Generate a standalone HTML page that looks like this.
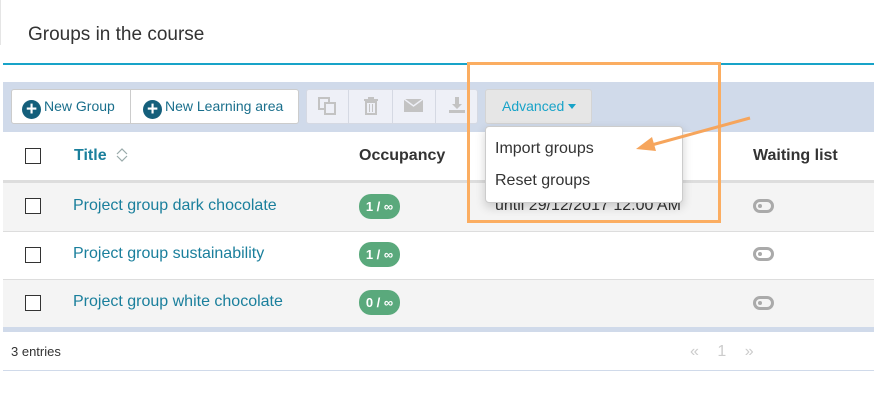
<!DOCTYPE html>
<html><head><meta charset="utf-8"><style>
*{margin:0;padding:0;box-sizing:border-box}
body{width:874px;height:401px;background:#fff;font-family:"Liberation Sans",sans-serif;position:relative;overflow:hidden;color:#333}
.a{position:absolute}
.cb{position:absolute;left:25px;width:16px;height:16px;border:1px solid #333;background:#fff}
.lnk{position:absolute;left:73px;color:#1a7f9c;font-size:16px}
.badge{position:absolute;left:359px;width:41px;height:25px;border-radius:12px;background:#5aa97c;color:#fff;font-weight:bold;font-size:13px;line-height:25px;text-align:center}
.tog{position:absolute;left:753px;width:21px;height:14px;border:3px solid #aaa;border-radius:7px}
.tog:after{content:"";position:absolute;left:2px;top:2px;width:4px;height:4px;border-radius:50%;background:#aaa}
.btn{position:absolute;top:89px;height:35px;font-size:14px;line-height:35px}
.plus{display:inline-block;width:19px;height:19px;border-radius:50%;background:#145f7b;color:#fff;font-weight:bold;text-align:center;line-height:19px;font-size:19px;vertical-align:-4px;margin-right:3px}
</style></head><body>
<div class="a" style="left:0;top:0;width:1px;height:45px;background:#e5e5e5"></div>
<div class="a" style="left:28px;top:24px;font-size:19px;color:#333">Groups in the course</div>
<div class="a" style="left:3px;top:63px;width:871px;height:2px;background:#18a3c8"></div>
<div class="a" style="left:3px;top:82px;width:871px;height:50px;background:#d0daea"></div>
<div class="a" style="left:11px;top:89px;width:288px;height:35px;background:#fff;border:1px solid #ccc;border-radius:3px"></div>
<div class="a" style="left:130px;top:89px;width:1px;height:35px;background:#ccc"></div>
<div class="btn" style="left:22px;color:#1a6f8c"><span class="plus">+</span>New Group</div>
<div class="btn" style="left:143px;color:#1a6f8c"><span class="plus">+</span>New Learning area</div>
<div class="a" style="left:306px;top:89px;width:172px;height:35px;background:#eef0f7;border:1px solid #d5d9e3;border-radius:3px"></div>
<div class="a" style="left:348px;top:89px;width:1px;height:35px;background:#d5d9e3"></div>
<div class="a" style="left:392px;top:89px;width:1px;height:35px;background:#d5d9e3"></div>
<div class="a" style="left:435px;top:89px;width:1px;height:35px;background:#d5d9e3"></div>
<svg class="a" style="left:318px;top:97px" width="20" height="18"><rect x="1" y="1" width="10" height="11" fill="none" stroke="#c3c3c3" stroke-width="2"/><rect x="7" y="6" width="10" height="11" fill="#eef0f7" stroke="#c3c3c3" stroke-width="2"/></svg>
<svg class="a" style="left:362px;top:96px" width="18" height="19"><rect x="2" y="3" width="14" height="2" fill="#c3c3c3"/><rect x="6" y="1" width="6" height="2" fill="#c3c3c3"/><rect x="4" y="6" width="10" height="12" fill="none" stroke="#c3c3c3" stroke-width="2"/><path d="M7.5 8v8M10.5 8v8" stroke="#c3c3c3"/></svg>
<svg class="a" style="left:404px;top:99px" width="20" height="14"><rect x="0" y="0" width="19" height="13" fill="#c3c3c3"/><path d="M0 0l9.5 7L19 0" fill="none" stroke="#eef0f7" stroke-width="1.5"/></svg>
<svg class="a" style="left:448px;top:96px" width="18" height="18"><path d="M7 1h4v7h3l-5 5-5-5h3z" fill="#c3c3c3"/><rect x="1" y="14" width="16" height="3" fill="#c3c3c3"/></svg>
<div class="a" style="left:485px;top:89px;width:107px;height:35px;background:#e6e6e6;border:1px solid #d4d4d4;border-radius:3px;color:#18a3c8;font-size:14px;line-height:33px;padding-left:16px">Advanced <span style="display:inline-block;border-left:4px solid transparent;border-right:4px solid transparent;border-top:5px solid #18a3c8;vertical-align:2px"></span></div>
<div class="cb" style="top:148px"></div>
<div class="a" style="left:74px;top:147px;color:#1a7f9c;font-weight:bold;font-size:16px">Title</div>
<svg class="a" style="left:116px;top:148px" width="12" height="14"><path d="M1 6l5-5 5 5M1 8l5 5 5-5" fill="none" stroke="#9aa" stroke-width="1.2"/></svg>
<div class="a" style="left:359px;top:147px;font-weight:bold;font-size:16px">Occupancy</div>
<div class="a" style="left:753px;top:147px;font-weight:bold;font-size:16px">Waiting list</div>
<div class="a" style="left:3px;top:180px;width:871px;height:3px;background:#ddd"></div>
<div class="a" style="left:3px;top:183px;width:871px;height:48px;background:#f4f4f4"></div>
<div class="a" style="left:3px;top:231px;width:871px;height:1px;background:#ddd"></div>
<div class="a" style="left:3px;top:279px;width:871px;height:1px;background:#ddd"></div>
<div class="a" style="left:3px;top:280px;width:871px;height:47px;background:#f4f4f4"></div>
<div class="a" style="left:3px;top:327px;width:871px;height:5px;background:#d0daea"></div>
<div class="cb" style="top:198px"></div><div class="lnk" style="top:197px">Project group dark chocolate</div><div class="badge" style="top:194px">1 / ∞</div>
<div class="a" style="left:495px;top:197px;font-size:16px">until 29/12/2017 12:00 AM</div>
<div class="tog" style="top:199px"></div>
<div class="cb" style="top:247px"></div><div class="lnk" style="top:245px">Project group sustainability</div><div class="badge" style="top:242px">1 / ∞</div>
<div class="tog" style="top:247px"></div>
<div class="cb" style="top:295px"></div><div class="lnk" style="top:293px">Project group white chocolate</div><div class="badge" style="top:290px">0 / ∞</div>
<div class="tog" style="top:296px"></div>
<div class="a" style="left:11px;top:344px;font-size:13px">3 entries</div>
<div class="a" style="left:690px;top:343px;font-size:16px;color:#ccc;word-spacing:14px">« 1 »</div>
<div class="a" style="left:3px;top:370px;width:871px;height:1px;background:#d0daea"></div>
<div class="a" style="left:485px;top:126px;width:198px;height:77px;background:#fff;border:1px solid #ccc;border-radius:4px;box-shadow:0 4px 10px rgba(0,0,0,.18)"></div>
<div class="a" style="left:495px;top:140px;font-size:16px">Import groups</div>
<div class="a" style="left:495px;top:172px;font-size:16px">Reset groups</div>
<div class="a" style="left:467px;top:62px;width:254px;height:161px;border:3px solid #fbad61"></div>
<svg class="a" style="left:630px;top:110px" width="130" height="50"><path d="M120 8L18 36" stroke="#f6a55c" stroke-width="3"/><path d="M6 39l16-12 4 14z" fill="#f6a55c"/></svg>
</body></html>
